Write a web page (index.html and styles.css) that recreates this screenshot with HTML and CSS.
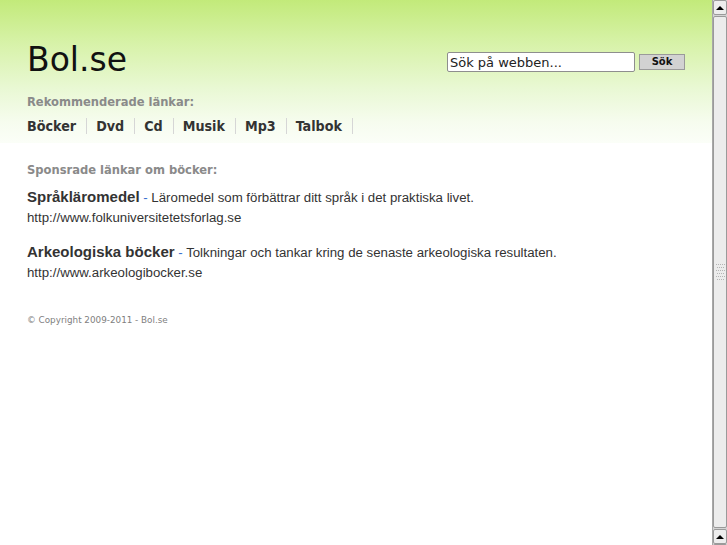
FILE: index.html
```html
<!DOCTYPE html>
<html lang="sv">
<head>
<meta charset="utf-8">
<title>Bol.se</title>
<link rel="stylesheet" href="styles.css">
</head>
<body>
<div class="page">
  <header class="header">
    <div class="top">
      <h1 class="logo">Bol.se</h1>
      <form class="search">
        <input class="search-input" type="text" value="Sök på webben...">
        <button class="search-btn" type="button">Sök</button>
      </form>
    </div>
    <h2 class="label label-rec">Rekommenderade länkar:</h2>
    <nav class="nav">
      <a class="nav-item">Böcker</a>
      <a class="nav-item">Dvd</a>
      <a class="nav-item">Cd</a>
      <a class="nav-item">Musik</a>
      <a class="nav-item">Mp3</a>
      <a class="nav-item">Talbok</a>
    </nav>
  </header>
  <main class="content">
    <h2 class="label label-spons">Sponsrade länkar om böcker:</h2>
    <div class="ad">
      <div class="ad-line"><a class="ad-title">Språkläromedel</a> <span class="dash">-</span> <span class="ad-desc">Läromedel som förbättrar ditt språk i det praktiska livet.</span></div>
      <div class="ad-url">http://www.folkuniversitetetsforlag.se</div>
    </div>
    <div class="ad">
      <div class="ad-line"><a class="ad-title">Arkeologiska böcker</a> <span class="dash">-</span> <span class="ad-desc">Tolkningar och tankar kring de senaste arkeologiska resultaten.</span></div>
      <div class="ad-url">http://www.arkeologibocker.se</div>
    </div>
    <p class="copy">© Copyright 2009-2011 - Bol.se</p>
  </main>
</div>
<div class="scrollbar">
  <div class="sb-btn"><span class="arrow-up"></span></div>
  <div class="sb-thumb">
    <svg class="grip" width="9" height="16" viewBox="0 0 9 16">
      <g fill="#b4b4b4">
        <rect x="0" y="0" width="1" height="1"/><rect x="2" y="0" width="1" height="1"/><rect x="4" y="0" width="1" height="1"/><rect x="6" y="0" width="1" height="1"/><rect x="8" y="0" width="1" height="1"/>
        <rect x="1" y="3" width="1" height="1"/><rect x="3" y="3" width="1" height="1"/><rect x="5" y="3" width="1" height="1"/><rect x="7" y="3" width="1" height="1"/>
        <rect x="0" y="6" width="1" height="1"/><rect x="2" y="6" width="1" height="1"/><rect x="4" y="6" width="1" height="1"/><rect x="6" y="6" width="1" height="1"/><rect x="8" y="6" width="1" height="1"/>
        <rect x="1" y="9" width="1" height="1"/><rect x="3" y="9" width="1" height="1"/><rect x="5" y="9" width="1" height="1"/><rect x="7" y="9" width="1" height="1"/>
        <rect x="0" y="12" width="1" height="1"/><rect x="2" y="12" width="1" height="1"/><rect x="4" y="12" width="1" height="1"/><rect x="6" y="12" width="1" height="1"/><rect x="8" y="12" width="1" height="1"/>
        <rect x="1" y="15" width="1" height="1"/><rect x="3" y="15" width="1" height="1"/><rect x="5" y="15" width="1" height="1"/><rect x="7" y="15" width="1" height="1"/>
      </g>
    </svg>
  </div>
  <div class="sb-btn"><span class="arrow-up"></span></div>
  <div class="sb-btn"><span class="arrow-down"></span></div>
</div>
</body>
</html>
```
FILE: styles.css
```css
html, body {
  margin: 0;
  padding: 0;
  background: #ffffff;
}
body {
  font-family: "DejaVu Sans", Verdana, sans-serif;
  color: #333;
  overflow: hidden;
}
.page {
  margin-right: 15px;
}
.header {
  background: linear-gradient(to bottom, #c2ea7a 0%, #d7f2a8 30%, #e9f8d4 62%, #f6fcee 85%, #fbfef8 100%);
  padding: 41px 27px 9px 27px;
}
.top {
  display: flex;
  justify-content: space-between;
  align-items: flex-start;
}
.logo {
  margin: 0;
  font-size: 33px;
  font-weight: normal;
  line-height: 38px;
  color: #111;
}
.search {
  display: flex;
  align-items: center;
  margin: 11px 0 0 0;
}
.search-input {
  box-sizing: border-box;
  width: 188px;
  height: 20px;
  margin: 0;
  padding: 0 2px;
  border: 1px solid #8e8e8e;
  border-radius: 2px;
  font-family: "DejaVu Sans", Verdana, sans-serif;
  font-size: 13px;
  color: #222;
  background: #fff;
}
.search-btn {
  box-sizing: border-box;
  width: 46px;
  height: 16px;
  margin: 0 0 0 4px;
  padding: 0;
  border: 1px solid #9a9a9a;
  background: #d2d2d2;
  font-family: "DejaVu Sans", Verdana, sans-serif;
  font-size: 10px;
  font-weight: bold;
  line-height: 14px;
  color: #111;
  border-radius: 0;
}
.label {
  margin: 0;
  font-family: "DejaVu Sans Condensed", "DejaVu Sans", sans-serif;
  font-stretch: condensed;
  font-size: 12.8px;
  font-weight: bold;
  line-height: 14px;
  color: #8a8a8a;
}
.label-rec {
  margin-top: 16px;
}
.nav {
  display: flex;
  margin-top: 9px;
}
.nav-item {
  font-family: "DejaVu Sans Condensed", "DejaVu Sans", sans-serif;
  font-stretch: condensed;
  font-size: 14.2px;
  font-weight: bold;
  line-height: 16px;
  color: #333;
  padding: 0 10px 0 9px;
  border-right: 1px solid #d6d6d6;
  text-decoration: none;
}
.nav-item:first-child {
  padding-left: 0;
}
.content {
  padding: 0 27px;
}
.label-spons {
  margin-top: 20px;
}
.ad {
  font-family: "Liberation Sans", Arial, sans-serif;
  margin-top: 10px;
}
.ad + .ad {
  margin-top: 14px;
}
.ad-line {
  line-height: 20px;
  font-size: 13.25px;
  color: #333;
}
.ad-title {
  font-size: 15px;
  font-weight: bold;
  color: #333;
}
.dash {
  color: #3a6fd0;
}
.ad-desc {
  color: #333;
}
.ad-url {
  font-size: 13.25px;
  line-height: 20px;
  color: #333;
}
.copy {
  margin: 32px 0 0 0;
  font-size: 8.8px;
  line-height: 10px;
  color: #808080;
}
.scrollbar {
  position: fixed;
  top: 0;
  right: 0;
  width: 15px;
  height: 545px;
  overflow: hidden;
  box-sizing: border-box;
  background: #d4d4d4;
  border-left: 1px solid #a8a8a8;
  display: flex;
  flex-direction: column;
}
.sb-btn {
  flex: none;
  box-sizing: border-box;
  height: 15px;
  border: 1px solid #9a9a9a;
  border-radius: 2px;
  background: #ededed;
  display: flex;
  align-items: center;
  justify-content: center;
}
.sb-thumb {
  flex: none;
  box-sizing: border-box;
  height: 512px;
  margin: 1px 0;
  border: 1px solid #9a9a9a;
  border-radius: 2px;
  background: #ececec;
  display: flex;
  align-items: center;
  justify-content: center;
}
.arrow-up {
  width: 0;
  height: 0;
  border-left: 4px solid transparent;
  border-right: 4px solid transparent;
  border-bottom: 4px solid #000;
}
.arrow-down {
  width: 0;
  height: 0;
  border-left: 4px solid transparent;
  border-right: 4px solid transparent;
  border-top: 4px solid #000;
}
```
